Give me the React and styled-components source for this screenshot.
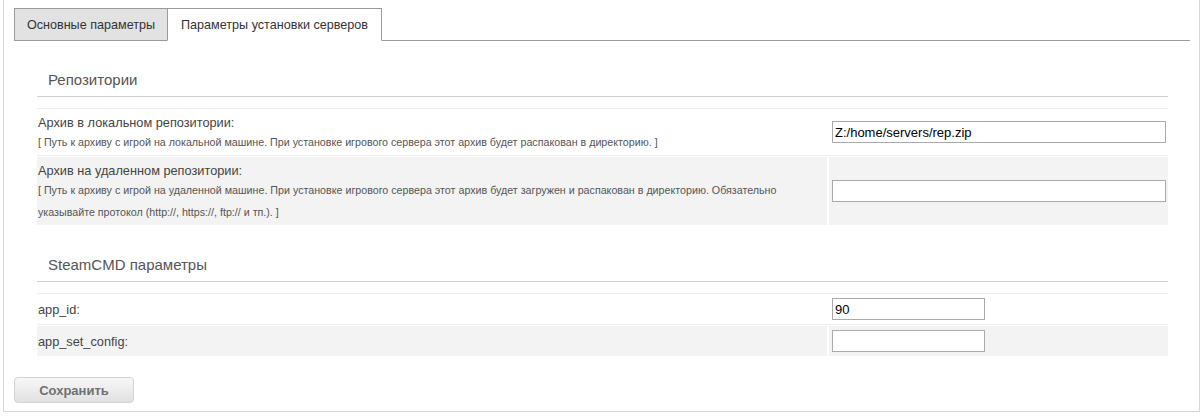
import React from 'react';
import styled, { createGlobalStyle } from 'styled-components';

const GlobalStyle = createGlobalStyle`
  body {
    margin: 0;
    background: #fff;
    font-family: "Liberation Sans", Arial, sans-serif;
  }
`;

const Panel = styled.div`
  box-sizing: border-box;
  width: 1197px;
  height: 412px;
  margin-left: 3px;
  padding-top: 8px;
  border: 1px solid #d6d6d6;
  border-top: none;
  display: flex;
  flex-direction: column;
`;

const TabBar = styled.div`
  display: flex;
  margin: 0 9px 0 10px;
  border-bottom: 1px solid #9a9a9a;
`;

const Tab = styled.div`
  box-sizing: border-box;
  width: ${(p) => p.$width}px;
  height: 33px;
  margin-bottom: -1px;
  line-height: 32px;
  text-align: center;
  font-size: 12.6px;
  color: #333;
  white-space: nowrap;
  border: 1px solid #9a9a9a;
  border-bottom-color: ${(p) => (p.$active ? '#fff' : '#9a9a9a')};
  background: ${(p) => (p.$active ? '#fff' : '#e2e2e2')};
  & + & {
    margin-left: -1px;
  }
`;

const Content = styled.div`
  padding: 0 31px 0 33px;
`;

const SectionTitle = styled.div`
  margin-top: 31px;
  padding: 0 11px 8px;
  line-height: 16px;
  font-size: 15px;
  color: #555;
  border-bottom: 1px solid #cfcfcf;
`;

const Table = styled.div`
  margin-top: 11px;
  border-top: 1px solid #ededed;
`;

const Row = styled.div`
  display: grid;
  grid-template-columns: 1fr 339px;
  column-gap: 2px;
  & + & {
    margin-top: 1px;
  }
  border-bottom: 1px solid ${(p) => (p.$alt ? 'transparent' : '#ededed')};
`;

const LabelCell = styled.div`
  padding: ${(p) => (p.$compact ? '5px 1px 3px' : '6px 1px 2px')};
  background: ${(p) => (p.$alt ? '#f3f3f3' : '#fff')};
  display: flex;
  flex-direction: column;
  justify-content: center;
`;

const Label = styled.div`
  font-size: 12.75px;
  line-height: 16px;
  color: #444;
`;

const Hint = styled.div`
  font-size: 10.7px;
  line-height: 22px;
  color: #555;
`;

const InputCell = styled.div`
  display: flex;
  align-items: center;
  padding: 4px 0 4px 3px;
  background: ${(p) => (p.$alt ? '#f3f3f3' : '#fff')};
`;

const TextInput = styled.input`
  box-sizing: border-box;
  width: ${(p) => (p.$short ? '153px' : '334px')};
  height: 22px;
  margin: 0;
  padding: 0 2px;
  border: 1px solid #aaa;
  font-family: "Liberation Sans", Arial, sans-serif;
  font-size: 13px;
  color: #000;
  background: #fff;
  outline: none;
`;

const Footer = styled.div`
  padding: 20px 10px 0;
`;

const SaveButton = styled.button`
  box-sizing: border-box;
  width: 120px;
  height: 26px;
  border: 1px solid #d3d3d3;
  border-radius: 4px;
  background: linear-gradient(#f7f7f7, #e1e1e1);
  font-family: "Liberation Sans", Arial, sans-serif;
  font-size: 13px;
  font-weight: bold;
  color: #707070;
  cursor: pointer;
`;

export default function App() {
  return (
    <>
      <GlobalStyle />
      <Panel>
        <TabBar>
          <Tab $width={154}>Основные параметры</Tab>
          <Tab $width={215} $active>Параметры установки серверов</Tab>
        </TabBar>
        <Content>
          <SectionTitle>Репозитории</SectionTitle>
          <Table>
            <Row>
              <LabelCell>
                <Label>Архив в локальном репозитории:</Label>
                <Hint>[ Путь к архиву с игрой на локальной машине. При установке игрового сервера этот архив будет распакован в директорию. ]</Hint>
              </LabelCell>
              <InputCell>
                <TextInput defaultValue="Z:/home/servers/rep.zip" />
              </InputCell>
            </Row>
            <Row $alt>
              <LabelCell $alt>
                <Label>Архив на удаленном репозитории:</Label>
                <Hint>[ Путь к архиву с игрой на удаленной машине. При установке игрового сервера этот архив будет загружен и распакован в директорию. Обязательно указывайте протокол (http://, https://, ftp:// и тп.). ]</Hint>
              </LabelCell>
              <InputCell $alt>
                <TextInput defaultValue="" />
              </InputCell>
            </Row>
          </Table>
          <SectionTitle>SteamCMD параметры</SectionTitle>
          <Table>
            <Row>
              <LabelCell $compact>
                <Label>app_id:</Label>
              </LabelCell>
              <InputCell>
                <TextInput $short defaultValue="90" />
              </InputCell>
            </Row>
            <Row $alt>
              <LabelCell $compact $alt>
                <Label>app_set_config:</Label>
              </LabelCell>
              <InputCell $alt>
                <TextInput $short defaultValue="" />
              </InputCell>
            </Row>
          </Table>
        </Content>
        <Footer>
          <SaveButton>Сохранить</SaveButton>
        </Footer>
      </Panel>
    </>
  );
}
